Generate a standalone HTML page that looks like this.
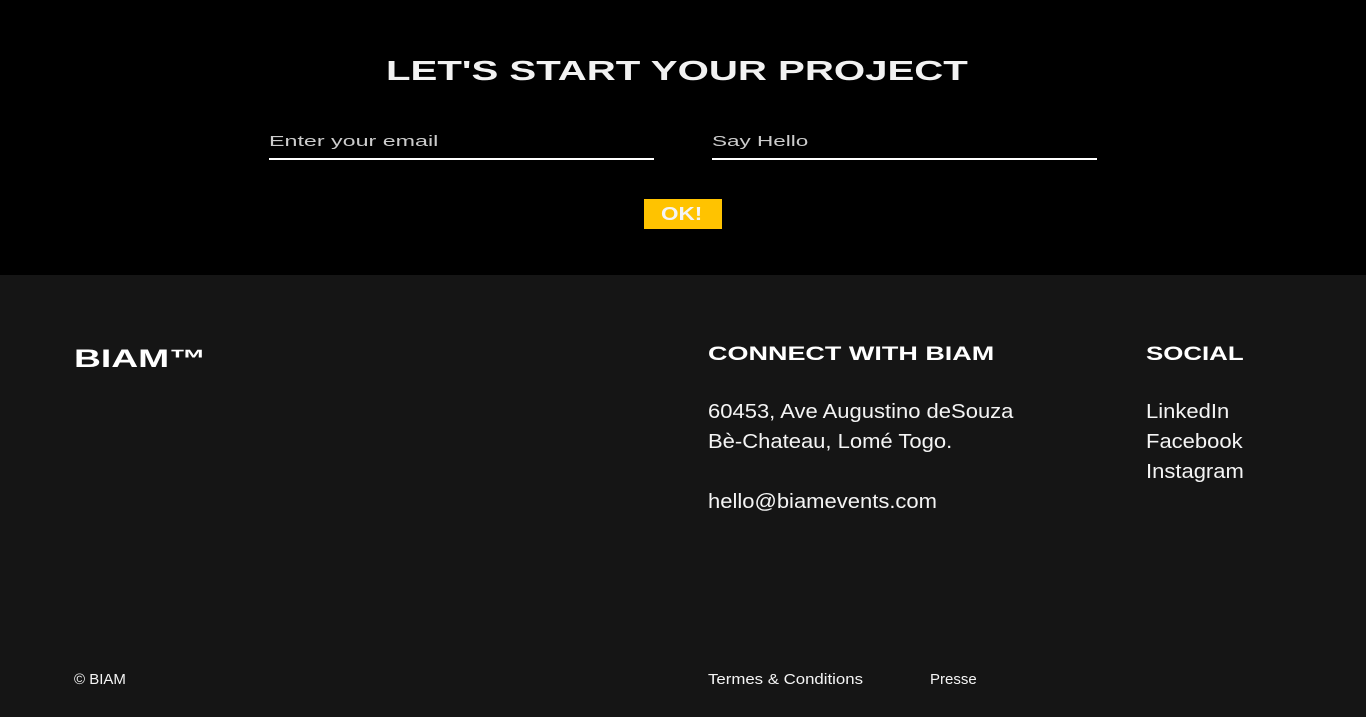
<!DOCTYPE html>
<html><head><meta charset="utf-8"><style>
*{margin:0;padding:0;box-sizing:border-box}
body{width:1366px;height:717px;background:#151515;font-family:"Liberation Sans",sans-serif;color:#fff;position:relative;overflow:hidden}
.top{position:absolute;left:0;top:0;width:1366px;height:275px;background:#000}
.a{position:absolute;white-space:nowrap}
.x{display:inline-block;font-weight:bold;transform-origin:left top}
.n{display:inline-block;transform-origin:left top;transform:scaleX(1.1)}
.line{position:absolute;height:2px;background:#fff}
.t{font-size:20px;line-height:30px;color:#f4f4f4}
.s{font-size:15px;color:#f4f4f4}
</style></head><body>
<div class="top"></div>
<div class="a" style="left:386px;top:55px"><span class="x" style="font-size:28px;transform:scaleX(1.435);color:#f2f2f2">LET'S START YOUR PROJECT</span></div>
<div class="a" style="left:269px;top:133px"><span class="x" style="font-size:15px;font-weight:normal;transform:scaleX(1.55);color:#ccc">Enter your email</span></div>
<div class="line" style="left:269px;top:158px;width:385px"></div>
<div class="a" style="left:712px;top:133px"><span class="x" style="font-size:15px;font-weight:normal;transform:scaleX(1.5);color:#ccc">Say Hello</span></div>
<div class="line" style="left:712px;top:158px;width:385px"></div>
<div class="a" style="left:644px;top:199px;width:78px;height:30px;background:#ffc300"></div>
<div class="a" style="left:661px;top:204px"><span class="x" style="font-size:18px;transform:scaleX(1.25);color:#f4f4f4">OK!</span></div>
<div class="a" style="left:74px;top:345px"><span class="x" style="font-size:25px;transform:scaleX(1.49)">BIAM™</span></div>
<div class="a" style="left:708px;top:344px"><span class="x" style="font-size:19px;transform:scaleX(1.42)">CONNECT WITH BIAM</span></div>
<div class="a" style="left:1146px;top:344px"><span class="x" style="font-size:19px;transform:scaleX(1.36)">SOCIAL</span></div>
<div class="a t" style="left:708px;top:397px"><span class="n">60453, Ave Augustino deSouza<br>Bè-Chateau, Lomé Togo.<br><br>hello@biamevents.com</span></div>
<div class="a t" style="left:1146px;top:397px"><span class="n">LinkedIn<br>Facebook<br>Instagram</span></div>
<div class="a s" style="left:74px;top:671px">© BIAM</div>
<div class="a s" style="left:708px;top:671px"><span class="n" style="transform:scaleX(1.12)">Termes &amp; Conditions</span></div>
<div class="a s" style="left:930px;top:671px">Presse</div>
</body></html>
